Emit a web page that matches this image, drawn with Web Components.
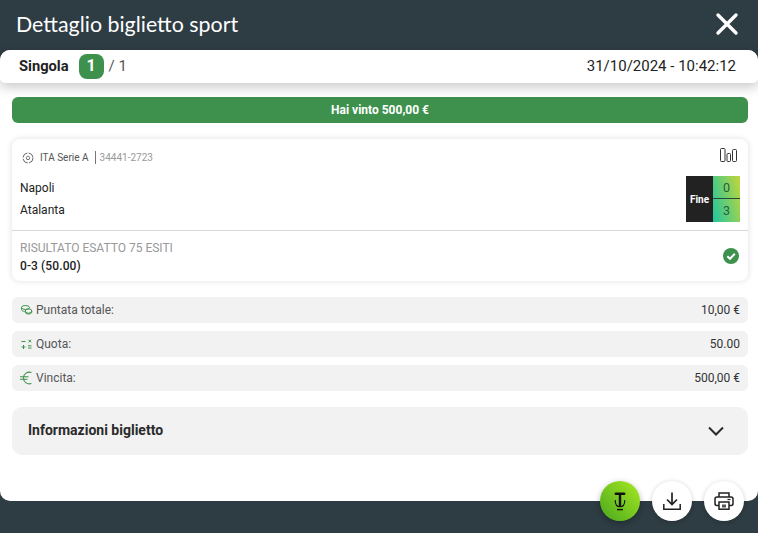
<!DOCTYPE html>
<html lang="it">
<head>
<meta charset="utf-8">
<title>Dettaglio biglietto sport</title>
<style>
  html, body { margin: 0; height: 100%; }
  body { background: #2e3c43; font-family: Roboto, "Liberation Sans", sans-serif; overflow: hidden; }
</style>
</head>
<body>
<ticket-detail></ticket-detail>

<script>
class TicketHeader extends HTMLElement {
    constructor() {
        super();
        const shadow = this.attachShadow({ mode: 'open' });
        shadow.innerHTML = `
        <style>
            :host { display: flex; height: 50px; align-items: center; justify-content: space-between; padding: 0 19px 2px 16px; box-sizing: border-box; color: #fff; }
            h1 { margin: 0; font: 400 21.4px Lato, sans-serif; }
            svg { display: block; }
        </style>
        <h1><slot></slot></h1>
        <svg width="24" height="24" viewBox="0 0 24 24"><path d="M3 3 L21 21 M21 3 L3 21" stroke="#fff" stroke-width="3.4" stroke-linecap="round"/></svg>`;
    }
}

class TicketSubheader extends HTMLElement {
    constructor() {
        super();
        const shadow = this.attachShadow({ mode: 'open' });
        shadow.innerHTML = `
        <style>
            :host { display: flex; height: 33px; align-items: center; justify-content: space-between; padding: 0 22px 0 19px; box-sizing: border-box;
                background: #fff; border-radius: 10px 10px 5px 5px; box-shadow: 0 4px 12px rgba(0,0,0,.22); color: #222; position: relative; }
            .left { display: flex; align-items: center; }
            b { font-weight: 700; font-size: 14.7px; padding-bottom: 2px; }
            .num { width: 25px; height: 25px; margin: 0 5px 0 10px; padding-bottom: 2px; box-sizing: border-box; border-radius: 8px; background: #3d914d; color: #fff; font-weight: 700; font-size: 16px; display: flex; align-items: center; justify-content: center; }
            .tot { font-size: 15px; color: #555; padding-bottom: 2px; }
            .date { font-size: 15px; padding-bottom: 2px; }
        </style>
        <div class="left"><b>Singola</b><span class="num">1</span><span class="tot">/ 1</span></div>
        <span class="date">31/10/2024 - 10:42:12</span>`;
    }
}

class WinBanner extends HTMLElement {
    constructor() {
        super();
        const shadow = this.attachShadow({ mode: 'open' });
        shadow.innerHTML = `
        <style>
            :host { display: flex; height: 26px; align-items: center; justify-content: center; background: #3d914d; border-radius: 6px; color: #fff; font-weight: 700; font-size: 12px; }
        </style>
        <slot></slot>`;
    }
}

class ScoreBox extends HTMLElement {
    constructor() {
        super();
        const shadow = this.attachShadow({ mode: 'open' });
        shadow.innerHTML = `
        <style>
            :host { display: flex; width: 54px; height: 46px; font-size: 12px; }
            .state { width: 27px; background: #222; color: #fff; font-weight: 700; font-size: 10px; display: flex; align-items: center; justify-content: center; }
            .score { flex: 1; display: grid; grid-template-rows: 1fr 1fr; background: linear-gradient(75deg, #1fc6a0, #c2d63a); color: #236045; font-size: 12.5px; text-align: center; }
            .score span { display: flex; align-items: center; justify-content: center; }
            .score span:first-child { border-bottom: 1px solid #25493a; }
        </style>
        <div class="state">Fine</div>
        <div class="score"><span>${this.getAttribute('home')}</span><span>${this.getAttribute('away')}</span></div>`;
    }
}

class EventCard extends HTMLElement {
    constructor() {
        super();
        const shadow = this.attachShadow({ mode: 'open' });
        shadow.innerHTML = `
        <style>
            :host { display: block; height: 142px; box-sizing: border-box; background: #fff; border-radius: 8px; box-shadow: 0 0 6px rgba(0,0,0,.13); color: #222; }
            .top { height: 92px; padding: 0 8px; box-sizing: border-box; border-bottom: 1px solid #d8d8d8; position: relative; }
            .league { display: flex; align-items: center; height: 37px; font-size: 10px; color: #555; padding-left: 2px; }
            .league svg { margin-right: 6px; }
            .code { color: #999; border-left: 1px solid #777; margin-left: 6px; padding-left: 4px; line-height: 13px; }
            .teams { font-size: 12px; line-height: 22px; margin-top: 1px; }
            .stats { position: absolute; right: 11px; top: 9px; }
            score-box { position: absolute; right: 8px; top: 37px; }
            .bottom { display: flex; justify-content: space-between; align-items: center; height: 50px; padding: 0 9px 0 8px; }
            .texts { align-self: flex-start; padding-top: 10px; }
            .market { font-size: 12px; color: #999; line-height: 15px; }
            .pick { font-size: 12px; letter-spacing: .1px; font-weight: 500; color: #222; line-height: 17px; margin-top: 2px; }
        </style>
        <div class="top">
            <div class="league">
                <svg width="12" height="12" viewBox="0 0 12 12" fill="none" stroke="#666" stroke-width="1"><circle cx="6" cy="6" r="5" stroke-dasharray="6.500 1.400"/><path d="M6 4 7.800 5.300 7.100 7.500H4.900L4.200 5.300Z" stroke-width=".9"/></svg>
                <span>ITA Serie A</span><span class="code">34441-2723</span>
            </div>
            <div class="teams"><div>Napoli</div><div>Atalanta</div></div>
            <svg class="stats" width="17" height="14" viewBox="0 0 17 14" fill="none" stroke="#333" stroke-width="1"><rect x=".5" y=".5" width="4.500" height="13" rx="1"/><rect x="7" y="5.500" width="3.500" height="8" rx="1"/><rect x="12.500" y="1.500" width="4" height="12" rx="1"/></svg>
            <score-box home="0" away="3"></score-box>
        </div>
        <div class="bottom">
            <div class="texts">
                <div class="market">RISULTATO ESATTO 75 ESITI</div>
                <div class="pick">0-3 (50.00)</div>
            </div>
            <svg width="16" height="16" viewBox="0 0 16 16"><circle cx="8" cy="8" r="8" fill="#3d914d"/><path d="M4.300 8.200 7 10.800 11.800 5.800" fill="none" stroke="#fff" stroke-width="2"/></svg>
        </div>`;
    }
}

class SummaryRow extends HTMLElement {
    constructor() {
        super();
        const shadow = this.attachShadow({ mode: 'open' });
        shadow.innerHTML = `
        <style>
            :host { display: flex; height: 26px; align-items: center; justify-content: space-between; padding: 0 8px; background: #f2f2f2; border-radius: 6px; font-size: 12px; color: #333; }
            .label { display: flex; align-items: center; gap: 3px; color: #555; }
            ::slotted(svg) { display: block; }
        </style>
        <div class="label"><slot name="icon"></slot>${this.getAttribute('label')}</div>
        <div>${this.getAttribute('value')}</div>`;
    }
}

class InfoPanel extends HTMLElement {
    constructor() {
        super();
        const shadow = this.attachShadow({ mode: 'open' });
        shadow.innerHTML = `
        <style>
            :host { display: flex; height: 48px; box-sizing: border-box; padding: 0 24px 2px 16px; align-items: center; justify-content: space-between; background: #f2f2f2; border-radius: 10px; font-weight: 700; font-size: 14px; color: #2a2a2a; }
            svg { margin-top: 2px; }
        </style>
        <slot></slot>
        <svg width="16" height="10" viewBox="0 0 16 10"><path d="M1 1.500 8 8.500 15 1.500" fill="none" stroke="#2a2a2a" stroke-width="2"/></svg>`;
    }
}

class FabButton extends HTMLElement {
    constructor() {
        super();
        const shadow = this.attachShadow({ mode: 'open' });
        shadow.innerHTML = `
        <style>
            :host { display: flex; width: 40px; height: 40px; border-radius: 50%; align-items: center; justify-content: center; background: #fff; box-shadow: 0 1px 5px rgba(0,0,0,.2); }
            :host([accent]) { background: linear-gradient(45deg, #48a81e, #a8e822); box-shadow: 0 2px 6px rgba(0,0,0,.3); }
        </style>
        <slot></slot>`;
    }
}

class TicketDetail extends HTMLElement {
    constructor() {
        super();
        const shadow = this.attachShadow({ mode: 'open' });
        shadow.innerHTML = `
        <style>
            :host { display: block; width: 758px; height: 533px; position: relative; }
            .sheet { height: 451px; background: #fff; border-radius: 10px; }
            .content { padding: 14px 10px 0 12px; display: flex; flex-direction: column; }
            event-card { margin-top: 16px; }
            summary-row { margin-bottom: 8px; }
            summary-row:first-of-type { margin-top: 16px; }
            info-panel { margin-top: 8px; }
            .fabs { position: absolute; right: 14px; top: 481px; display: flex; gap: 12px; }
        </style>
        <ticket-header>Dettaglio biglietto sport</ticket-header>
        <div class="sheet">
            <ticket-subheader></ticket-subheader>
            <div class="content">
                <win-banner>Hai vinto 500,00 €</win-banner>
                <event-card></event-card>
                <summary-row label="Puntata totale:" value="10,00 €">
                    <svg slot="icon" width="13" height="10" viewBox="0 0 13 10" fill="none" stroke="#3d914d" stroke-width="1"><ellipse cx="5.500" cy="2.500" rx="4" ry="2"/><path d="M1.500 2.500v2c0 1 1.500 1.800 3 2"/><ellipse cx="8.500" cy="6" rx="3.300" ry="2.200"/><path d="M5.200 6v1c0 1.200 1.500 2 3.300 2s3.300-.8 3.300-2V6"/></svg>
                </summary-row>
                <summary-row label="Quota:" value="50.00">
                    <svg slot="icon" width="13" height="11" viewBox="0 0 13 11" fill="none" stroke="#3d914d" stroke-width="1"><path d="M1.500 2.500h4 M8.500 .800l2.600 2.600 M11.100 .800l-2.600 2.600 M1.500 8h4 M3.500 6v4 M8 6.800h3.500 M8 9h3.500"/></svg>
                </summary-row>
                <summary-row label="Vincita:" value="500,00 €">
                    <svg slot="icon" width="13" height="14" viewBox="0 0 13 14" fill="none" stroke="#3d914d" stroke-width="1.100"><path d="M11.500 1.500C7.500 .3 3.500 2.500 3.500 7S7.500 13.700 11.500 12.500 M0 5.700h8.500 M0 8.300h7.500"/></svg>
                </summary-row>
                <info-panel>Informazioni biglietto</info-panel>
            </div>
        </div>
        <div class="fabs">
            <fab-button accent><svg width="12" height="19" viewBox="0 0 12 19" fill="none" stroke="#111"><path d="M1.800 1.800h8.400" stroke-width="2.400" stroke-linecap="round"/><path d="M6 1.500v13" stroke-width="2.400"/><path d="M1.200 8c0 4.300 2 6.800 4.800 6.800s4.800-2.500 4.800-6.800" stroke-width="1.100"/><path d="M3 17.600h6" stroke-width="1.400"/></svg></fab-button>
            <fab-button><svg width="18" height="18" viewBox="0 0 18 18" fill="none" stroke="#222" stroke-width="1.700"><path d="M9 .500v12 M4 7.500 9 12.500l5-5"/><path d="M.800 12v5.200h16.400V12" stroke-width="1.500"/></svg></fab-button>
            <fab-button><svg width="20" height="18" viewBox="0 0 20 18" fill="none" stroke="#222" stroke-width="1.500"><path d="M5 5V1h10v4"/><path d="M5 13.500H3A2 2 0 0 1 1 11.500V7a2 2 0 0 1 2-2h14a2 2 0 0 1 2 2v4.500a2 2 0 0 1-2 2h-2"/><rect x="5" y="10" width="10" height="7.200"/><path d="M8 12.500h4v3H8z" fill="#555" stroke="none"/><path d="M13.500 7.500h3" stroke-width="1.200"/></svg></fab-button>
        </div>`;
    }
}

customElements.define('ticket-header', TicketHeader);
customElements.define('ticket-subheader', TicketSubheader);
customElements.define('win-banner', WinBanner);
customElements.define('score-box', ScoreBox);
customElements.define('event-card', EventCard);
customElements.define('summary-row', SummaryRow);
customElements.define('info-panel', InfoPanel);
customElements.define('fab-button', FabButton);
customElements.define('ticket-detail', TicketDetail);
</script>
</body>
</html>
